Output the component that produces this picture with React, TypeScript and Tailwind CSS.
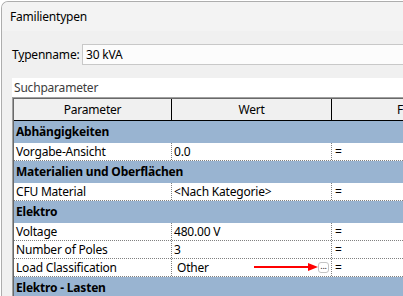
import React from "react";

type Row =
  | { kind: "group"; label: string }
  | { kind: "data"; label: string; value: string; button?: boolean; indent?: boolean };

const rows: Row[] = [
  { kind: "group", label: "Abhängigkeiten" },
  { kind: "data", label: "Vorgabe-Ansicht", value: "0.0" },
  { kind: "group", label: "Materialien und Oberflächen" },
  { kind: "data", label: "CFU Material", value: "<Nach Kategorie>" },
  { kind: "group", label: "Elektro" },
  { kind: "data", label: "Voltage", value: "480.00 V" },
  { kind: "data", label: "Number of Poles", value: "3" },
  { kind: "data", label: "Load Classification", value: "Other", button: true, indent: true },
  { kind: "group", label: "Elektro - Lasten" },
];

function Arrow() {
  return (
    <svg width="64" height="10" viewBox="0 0 64 10" className="absolute left-[82px] top-[3px]">
      <line x1="0" y1="5" x2="56" y2="5" stroke="#ff0000" strokeWidth="2" />
      <polygon points="54,1 64,5 54,9" fill="#ff0000" />
    </svg>
  );
}

export default function App() {
  return (
    <div
      className="w-[403px] h-[296px] overflow-hidden bg-white text-black text-[12px] leading-none tracking-[-0.2px]"
      style={{ fontFamily: '"Noto Sans", "Open Sans", sans-serif' }}
    >
      <div className="ml-[1px] mt-[1px] h-[300px] w-[420px] rounded-tl-[7px] border-l border-t border-[#adadad] bg-[#f0f0f0] overflow-hidden">
        {/* title bar */}
        <div className="h-[29px] bg-[#f3f3f3] flex items-center pl-[8px] pt-[1px]">
          Familientypen
        </div>

        <div className="pl-[10px] pt-[13px]">
          {/* Typenname */}
          <div className="flex items-center h-[21px]">
            <label className="block w-[70px] shrink-0">
              T<span className="underline underline-offset-2">y</span>penname:
            </label>
            <div className="flex-1 h-[21px] border border-[#c8c8c8] bg-[#fcfcfc] flex items-center pl-[3px]">
              30 kVA
            </div>
          </div>

          {/* Suchparameter */}
          <div className="mt-[13px] h-[19px] bg-white flex items-center pl-[2px] text-[#3c3c3c]">
            Suchparameter
          </div>

          {/* grid */}
          <div className="border-t border-l border-[#a0a0a0]">
            <div className="border-t border-l border-[#696969] bg-white">
              {/* header */}
              <div className="flex h-[22px] bg-[#f0f0f0] border-b border-black">
                <div className="w-[158px] border-r border-black flex items-center justify-center">
                  Parameter
                </div>
                <div className="w-[160px] border-r border-black flex items-center justify-center">
                  Wert
                </div>
                <div className="flex-1 flex items-center pl-[65px]">F</div>
              </div>

              {rows.map((r, i) =>
                r.kind === "group" ? (
                  <div
                    key={i}
                    className="h-[22px] bg-[#99b4d1] flex items-center pl-[2px] font-bold"
                  >
                    {r.label}
                  </div>
                ) : (
                  <div key={i} className="flex h-[18px] border-b border-dotted border-[#808080]">
                    <div className="w-[158px] border-r border-dotted border-[#808080] flex items-center pl-[2px]">
                      {r.label}
                    </div>
                    <div
                      className={`relative w-[160px] border-r border-dotted border-[#808080] flex items-center ${
                        r.indent ? "pl-[5px]" : "pl-[2px]"
                      }`}
                    >
                      {r.value}
                      {r.button && (
                        <>
                          <Arrow />
                          <div className="absolute left-[146px] top-[3px] w-[11px] h-[11px] rounded-[3px] border border-[#c4c4c4] bg-white flex items-end justify-center pb-[2px] text-[9px] leading-none text-[#222]">
                            ...
                          </div>
                        </>
                      )}
                    </div>
                    <div className="flex-1 flex items-center pl-[3px]">=</div>
                  </div>
                )
              )}
            </div>
          </div>
        </div>
      </div>
    </div>
  );
}
